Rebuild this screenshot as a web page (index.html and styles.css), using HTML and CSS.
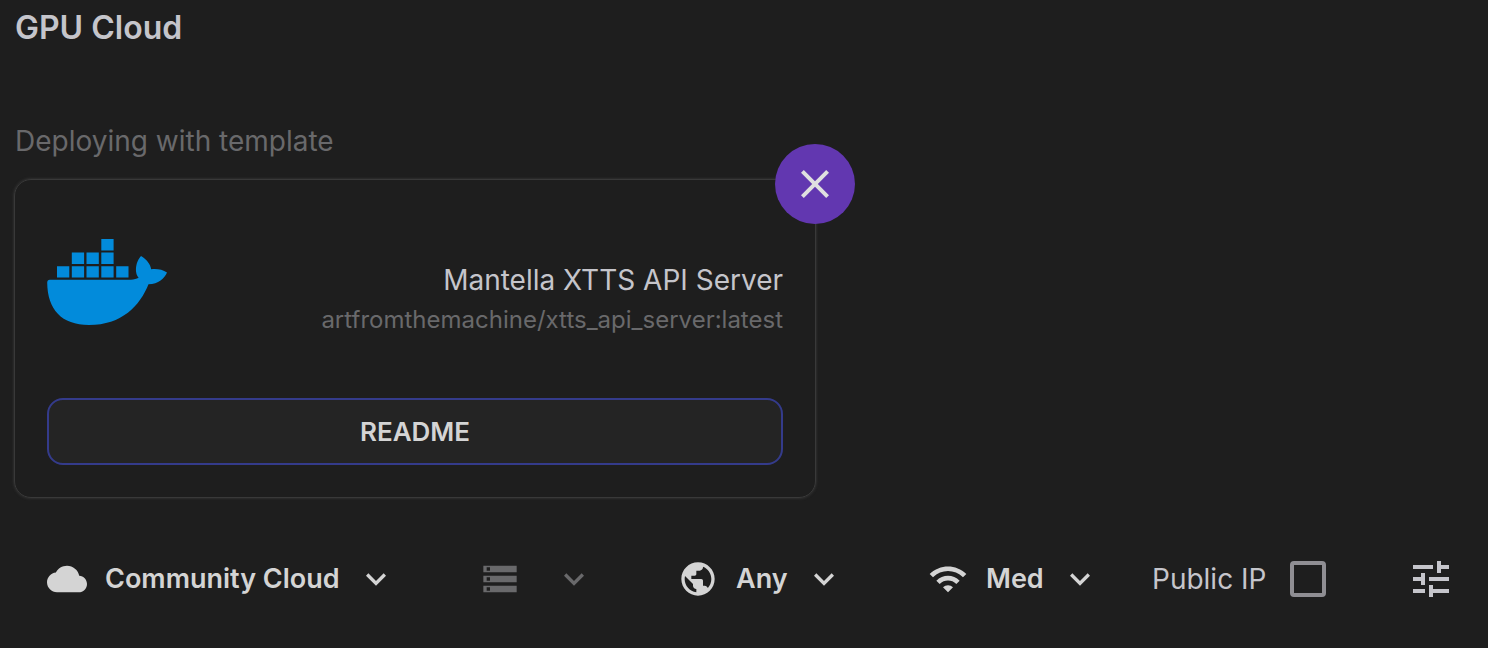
FILE: index.html
```html
<!DOCTYPE html>
<html lang="en">
<head>
<meta charset="utf-8">
<meta name="viewport" content="width=device-width, initial-scale=1">
<title>GPU Cloud</title>
<link rel="stylesheet" href="styles.css">
</head>
<body>
<main class="page">
  <h1 class="title">GPU Cloud</h1>
  <p class="subtitle">Deploying with template</p>

  <section class="card">
    <button class="close" type="button" aria-label="Remove template">
      <svg class="icon-lg" viewBox="0 0 24 24" aria-hidden="true"><path d="M19 6.41L17.59 5 12 10.59 6.41 5 5 6.41 10.59 12 5 17.59 6.41 19 12 13.41 17.59 19 19 17.59 13.41 12z"/></svg>
    </button>
    <div class="template">
      <svg class="docker" viewBox="0 0 120 87" aria-hidden="true">
        <path d="M54.300 0h12.300v11.400h-12.300zM24.800 13.600h12.300v11.400h-12.300zM39.500 13.600h12.300v11.400h-12.300zM54.300 13.600h12.300v11.400h-12.300zM10 27.200h12.300v11.400h-12.300zM24.800 27.200h12.300v11.400h-12.300zM39.500 27.200h12.300v11.400h-12.300zM54.300 27.200h12.300v11.400h-12.300zM69.200 27.200h12.300v11.400h-12.300z"/>
        <path d="M2.800 40.700H84C87 40.500 89.500 39.900 91.600 38.800C88.500 35 88.400 29.500 89.800 24.500C90.700 21.500 92 19 94 16.900C99.500 20.300 103.500 25 104.200 30.300C109.500 29.500 115.500 30.500 120 33.500C117.500 39.500 111.500 45 101.500 45.200C93 66.500 75 86 42 86C14.500 86 0.500 70.500 0.200 43.800Q0.200 40.700 2.800 40.700Z"/>
      </svg>
      <div class="template-text">
        <h2 class="template-name">Mantella XTTS API Server</h2>
        <p class="template-image">artfromthemachine/xtts_api_server:latest</p>
      </div>
    </div>
    <button class="readme" type="button">README</button>
  </section>

  <form class="toolbar">
    <div class="filters">
      <div class="filter">
        <svg class="icon" viewBox="0 0 24 24" aria-hidden="true"><path d="M19.35 10.04C18.67 6.59 15.64 4 12 4 9.11 4 6.6 5.64 5.35 8.04 2.34 8.36 0 10.91 0 14c0 3.310 2.690 6 6 6h13c2.760 0 5-2.240 5-5 0-2.640-2.050-4.780-4.650-4.960z"/></svg>
        <div class="picker">
          <select class="select" aria-label="Cloud type"><option>Community Cloud</option></select>
          <svg class="icon chevron" viewBox="0 0 24 24" aria-hidden="true"><path d="M7.410 8.590 12 13.170l4.590-4.580L18 10l-6 6-6-6z"/></svg>
        </div>
      </div>
      <div class="filter filter-disabled">
        <svg class="icon" viewBox="0 0 24 24" aria-hidden="true"><path d="M2 20h20v-4H2v4zm2-3h2v2H4v-2zM2 4v4h20V4H2zm4 3H4V5h2v2zm-4 7h20v-4H2v4zm2-3h2v2H4v-2z"/></svg>
        <div class="picker">
          <select class="select" aria-label="Network volume" disabled><option></option></select>
          <svg class="icon chevron" viewBox="0 0 24 24" aria-hidden="true"><path d="M7.410 8.590 12 13.170l4.590-4.580L18 10l-6 6-6-6z"/></svg>
        </div>
      </div>
      <div class="filter">
        <svg class="icon" viewBox="0 0 24 24" aria-hidden="true"><path d="M12 2C6.480 2 2 6.480 2 12s4.480 10 10 10 10-4.480 10-10S17.520 2 12 2zm-1 17.930c-3.950-.490-7-3.850-7-7.930 0-.620.080-1.210.210-1.790L9 15v1c0 1.100.900 2 2 2v1.930zm6.900-2.540c-.260-.810-1-1.390-1.900-1.390h-1v-3c0-.550-.450-1-1-1H8v-2h2c.550 0 1-.450 1-1V7h2c1.100 0 2-.900 2-2v-.410c2.930 1.190 5 4.060 5 7.410 0 2.080-.800 3.970-2.100 5.390z"/></svg>
        <div class="picker">
          <select class="select" aria-label="Region"><option>Any</option></select>
          <svg class="icon chevron" viewBox="0 0 24 24" aria-hidden="true"><path d="M7.410 8.590 12 13.170l4.590-4.580L18 10l-6 6-6-6z"/></svg>
        </div>
      </div>
      <div class="filter">
        <svg class="icon" viewBox="0 0 24 24" aria-hidden="true"><path d="M1 9l2 2c4.970-4.970 13.030-4.970 18 0l2-2C16.930 2.930 7.080 2.930 1 9zm8 8l3 3 3-3c-1.650-1.660-4.340-1.660-6 0zm-4-4l2 2c2.760-2.760 7.240-2.760 10 0l2-2C15.140 9.140 8.870 9.140 5 13z"/></svg>
        <div class="picker">
          <select class="select" aria-label="Internet speed"><option>Med</option></select>
          <svg class="icon chevron" viewBox="0 0 24 24" aria-hidden="true"><path d="M7.410 8.590 12 13.170l4.590-4.580L18 10l-6 6-6-6z"/></svg>
        </div>
      </div>
    </div>
    <label class="public-ip" for="public-ip">Public IP
      <input class="checkbox" type="checkbox" id="public-ip">
    </label>
    <button class="tune" type="button" aria-label="More filters">
      <svg class="icon-lg" viewBox="0 0 24 24" aria-hidden="true"><path d="M3 17v2h6v-2H3zM3 5v2h10V5H3zm10 16v-2h8v-2h-8v-2h-2v6h2zM7 9v2H3v2h4v2h2V9H7zm14 4v-2H11v2h10zm-6-4h2V7h4V5h-4V3h-2v6z"/></svg>
    </button>
  </form>
</main>
</body>
</html>
```
FILE: styles.css
```css
* {
  box-sizing: border-box;
}

body {
  margin: 0;
  background: #1e1e1e;
  color: #c5c5cb;
  font-family: Inter, "Liberation Sans", sans-serif;
  font-size: 28px;
  line-height: 40px;
}

button,
select {
  margin: 0;
  font: inherit;
  color: inherit;
  cursor: pointer;
}

svg {
  display: block;
  flex: none;
  fill: currentColor;
}

.page {
  padding: 8px 14px;
}

.title {
  margin: 0;
  padding-left: 1px;
  font-size: 32px;
  font-weight: 600;
}

.subtitle {
  margin: 73px 0 18px;
  padding-left: 1px;
  color: #69696b;
}

.card {
  position: relative;
  max-width: 802px;
  padding: 32px;
  border: 1px solid #393939;
  border-radius: 17px;
  box-shadow: 0 0 3px #404040;
}

.close {
  position: absolute;
  top: -36px;
  right: -40px;
  display: grid;
  place-items: center;
  width: 80px;
  height: 80px;
  padding: 0;
  border: 0;
  border-radius: 50%;
  background: #6237b0;
  color: #e0e0e0;
}

.template {
  display: flex;
  align-items: flex-start;
  justify-content: space-between;
  padding: 27px 0 58px;
}

.docker {
  width: 120px;
  height: 87px;
  fill: #028bdb;
}

.template-text {
  padding-top: 21px;
  text-align: right;
}

.template-name {
  margin: 0;
  font-size: 28px;
  font-weight: 400;
}

.template-image {
  margin: 0;
  font-size: 24px;
  color: #69696b;
}

.readme {
  display: block;
  width: 100%;
  padding: 12px;
  border: 2px solid #343b8b;
  border-radius: 16px;
  background: #242424;
  color: #d4d4d4;
  font-size: 26px;
  font-weight: 600;
  line-height: 39px;
}

.toolbar {
  display: flex;
  align-items: center;
  gap: 52px;
  padding: 57px 19px 0 33px;
}

.filters {
  display: flex;
  gap: 84px;
}

.filter {
  display: flex;
  align-items: center;
  gap: 18px;
  color: #d4d4d4;
}

.filter-disabled {
  gap: 34px;
  color: #69696b;
}

.icon {
  width: 40px;
  height: 40px;
}

.icon-lg {
  width: 48px;
  height: 48px;
}

.picker {
  position: relative;
}

.select {
  display: block;
  height: 40px;
  min-width: 40px;
  padding: 0 56px 0 0;
  border: 0;
  background: transparent;
  font-size: 27px;
  font-weight: 600;
  appearance: none;
}

.filter-disabled .select {
  width: 40px;
  padding: 0;
  opacity: 1;
}

.chevron {
  position: absolute;
  top: 0;
  right: 0;
  pointer-events: none;
}

.public-ip {
  display: flex;
  align-items: center;
  gap: 24px;
  white-space: nowrap;
}

.checkbox {
  width: 36px;
  height: 36px;
  margin: 0;
  border: 4px solid #8f8e93;
  border-radius: 4px;
  background: transparent;
  appearance: none;
}

.checkbox:checked {
  background: #8f8e93;
}

.tune {
  margin-left: auto;
  padding: 0;
  border: 0;
  background: transparent;
}
```
